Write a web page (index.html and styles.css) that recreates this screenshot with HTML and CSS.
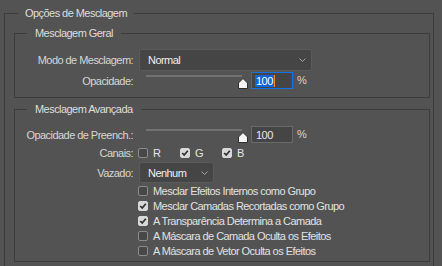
FILE: index.html
```html
<!DOCTYPE html>
<html>
	<head>
		<meta charset="UTF-8">
		<title>Opções de Mesclagem</title>
		<link rel="stylesheet" href="styles.css">
	</head>
	<body>
		<fieldset class="group outer">
			<legend>Opções de Mesclagem</legend>

			<fieldset class="group sub geral">
				<legend>Mesclagem Geral</legend>
				<div class="form">
					<label class="lbl">Modo de Mesclagem:</label>
					<div class="select select-wide">
						<span>Normal</span>
						<svg class="chev" width="7" height="4" viewBox="0 0 7 4"><polyline points="0.5,0.5 3.5,3.5 6.5,0.5" /></svg>
					</div>
					<label class="lbl row-slider">Opacidade:</label>
					<div class="slider-row row-slider">
						<div class="slider">
							<div class="track"></div>
							<svg class="thumb" width="10" height="11" viewBox="0 0 10 11"><path d="M5 0.5 L9.5 5 V10.5 H0.5 V5 Z" /></svg>
						</div>
						<div class="num focus"><span class="sel">100</span><span class="caret"></span></div>
						<span class="pct">%</span>
					</div>
				</div>
			</fieldset>

			<fieldset class="group sub avancada">
				<legend>Mesclagem Avançada</legend>
				<div class="form">
					<label class="lbl">Opacidade de Preench.:</label>
					<div class="slider-row">
						<div class="slider">
							<div class="track"></div>
							<svg class="thumb" width="10" height="11" viewBox="0 0 10 11"><path d="M5 0.5 L9.5 5 V10.5 H0.5 V5 Z" /></svg>
						</div>
						<div class="num">100</div>
						<span class="pct">%</span>
					</div>

					<label class="lbl row-canais">Canais:</label>
					<div class="canais row-canais">
						<span class="chan"><span class="box"></span>R</span>
						<span class="chan"><span class="box on"><svg width="10" height="10" viewBox="0 0 10 10"><polyline points="2.2,5 4.2,7 7.8,2.8" /></svg></span>G</span>
						<span class="chan"><span class="box on"><svg width="10" height="10" viewBox="0 0 10 10"><polyline points="2.2,5 4.2,7 7.8,2.8" /></svg></span>B</span>
					</div>

					<label class="lbl row-vazado">Vazado:</label>
					<div class="select select-small row-vazado">
						<span>Nenhum</span>
						<svg class="chev" width="7" height="4" viewBox="0 0 7 4"><polyline points="0.5,0.5 3.5,3.5 6.5,0.5" /></svg>
					</div>

					<div class="checks">
						<div class="check"><span class="box"></span>Mesclar Efeitos Internos como Grupo</div>
						<div class="check"><span class="box on"><svg width="10" height="10" viewBox="0 0 10 10"><polyline points="2.2,5 4.2,7 7.8,2.8" /></svg></span>Mesclar Camadas Recortadas como Grupo</div>
						<div class="check"><span class="box on"><svg width="10" height="10" viewBox="0 0 10 10"><polyline points="2.2,5 4.2,7 7.8,2.8" /></svg></span>A Transparência Determina a Camada</div>
						<div class="check"><span class="box"></span>A Máscara de Camada Oculta os Efeitos</div>
						<div class="check"><span class="box"></span>A Máscara de Vetor Oculta os Efeitos</div>
					</div>
				</div>
			</fieldset>
		</fieldset>
	</body>
</html>
```

FILE: styles.css
```css
* {
	box-sizing: border-box;
}
body {
	margin: 0;
	width: 442px;
	height: 266px;
	overflow: hidden;
	background: #535353;
	color: #d6d6d6;
	font-family: "Liberation Sans", Arial, sans-serif;
	font-size: 11px;
	letter-spacing: -0.55px;
}
.group {
	margin: 0;
	padding: 0;
	min-width: 0;
	border: 1px solid #3c3c3c;
}
.group legend {
	line-height: 14px;
	height: 14px;
	color: #dedede;
}
.outer {
	margin: 6px 8px 0 4px;
	padding: 6px 3px 0 9px;
	height: 270px;
}
.outer > legend {
	margin-left: 4px;
	padding: 0 7px;
}
.sub > legend {
	margin-left: 12px;
	padding: 0 8px;
}
.geral {
	padding: 9px 0 7px 0;
}
.avancada {
	margin-top: 4px;
	padding: 10px 0 3px 0;
}

.form {
	display: grid;
	grid-template-columns: 118px 1fr;
	column-gap: 5px;
	align-items: center;
}
.lbl {
	text-align: right;
	white-space: nowrap;
}
.row-slider {
	margin-top: 1px;
}
.row-canais {
	margin-top: 3px;
}
.row-vazado {
	margin-top: 3px;
}

/* dropdowns */
.select {
	display: flex;
	align-items: center;
	justify-content: space-between;
	height: 22px;
	margin-left: 1px;
	padding: 0 5px 0 8px;
	background: #454545;
	border: 1px solid #5b5b5b;
	border-radius: 3px;
	color: #f0f0f0;
}
.select-wide {
	width: 173px;
}
.select-small {
	width: 75px;
	height: 21px;
}
.chev polyline {
	fill: none;
	stroke: #a4a4a4;
	stroke-width: 1;
}

/* slider + number */
.slider-row {
	display: flex;
	align-items: flex-start;
	height: 18px;
}
.slider {
	position: relative;
	width: 109px;
	height: 18px;
}
.track {
	width: 96px;
	height: 2px;
	margin: 3px 0 0 8px;
	background: #727272;
}
.thumb {
	position: absolute;
	left: 100px;
	top: 6px;
}
.thumb path {
	fill: #f4f4f4;
	stroke: #2e2e2e;
	stroke-width: 1;
}
.num {
	display: flex;
	align-items: center;
	width: 42px;
	height: 17px;
	margin-left: 4px;
	padding-left: 4px;
	background: #454545;
	border: 1px solid #6a6a6a;
	color: #e8e8e8;
}
.num.focus {
	border-color: #1473e6;
	padding-left: 3px;
}
.sel {
	background: #1565d8;
	color: #ffffff;
	line-height: 12px;
	padding: 0 1px;
}
.caret {
	width: 1px;
	height: 12px;
	background: #f08a24;
}
.pct {
	margin-left: 4px;
	line-height: 17px;
}

/* checkboxes */
.box {
	display: inline-flex;
	flex: none;
	width: 10px;
	height: 10px;
	border: 1px solid #8c8c8c;
	border-radius: 2px;
	background: #474747;
	margin-right: 5px;
}
.box.on {
	background: #d8d8d8;
	border-color: #d8d8d8;
}
.box svg {
	margin: -1px;
}
.box polyline {
	fill: none;
	stroke: #303030;
	stroke-width: 1.7;
}
.canais {
	display: flex;
	height: 12px;
	align-items: center;
}
.chan {
	display: flex;
	align-items: center;
	width: 42px;
	color: #e6e6e6;
}
.checks {
	grid-column: 2;
}
.check {
	display: flex;
	align-items: center;
	height: 15px;
	white-space: nowrap;
	color: #e2e2e2;
}
```
